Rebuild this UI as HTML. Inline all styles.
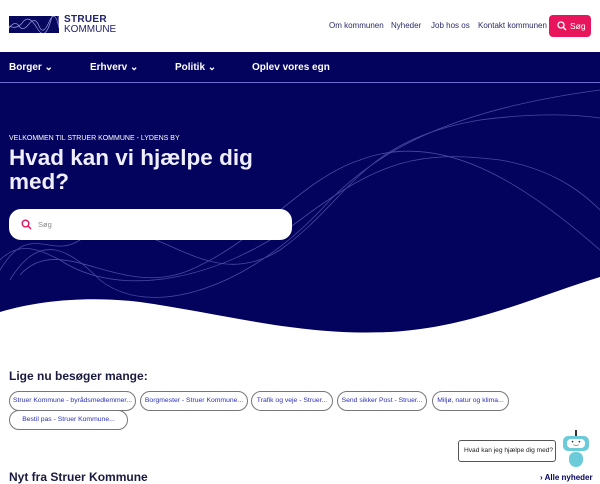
<!DOCTYPE html>
<html><head><meta charset="utf-8"><style>
*{margin:0;padding:0;box-sizing:border-box}
body{width:600px;height:480px;overflow:hidden;font-family:"Liberation Sans",sans-serif;background:#fff;position:relative}
.hdr{height:52px;position:relative;background:#fff}
.logo{position:absolute;left:9px;top:16px;width:50px;height:17px;background:#07075e;overflow:hidden}
.lt{position:absolute;left:64px;top:15px;color:#21226a;font-size:10px;line-height:10px}
.lt b{display:block;font-weight:bold;letter-spacing:.3px}
.tl{position:absolute;top:21px;font-size:8px;color:#2a2a6a}
.sbtn{position:absolute;left:549px;top:15px;width:42px;height:22px;background:#e8155c;border-radius:4px;color:#fff;font-size:8.5px;line-height:22px;padding-left:21px}
.nav{position:absolute;top:52px;left:0;width:600px;height:31px;background:#03035e;border-bottom:1px solid #6b6bd0}
.nav span{position:absolute;top:10px;color:#fff;font-weight:bold;font-size:10px}
.pill{position:absolute;height:20px;border:1px solid #777;border-radius:11px;line-height:18px;font-size:6.8px;color:#2c2fb8;text-align:center;white-space:nowrap;background:#fff}
</style></head><body>
<div class="hdr">
<div class="logo"><svg width="50" height="17"><path d="M0 12 Q6 4 10 10 T20 8 T30 10 T40 6 T50 12" stroke="#9a9ae0" fill="none" stroke-width=".7"/><path d="M0 10 Q8 14 14 6 T28 12 T42 4 T50 9" stroke="#9a9ae0" fill="none" stroke-width=".7"/></svg></div>
<div class="lt"><b>STRUER</b>KOMMUNE</div>
<span class="tl" style="left:329px">Om kommunen</span>
<span class="tl" style="left:391px">Nyheder</span>
<span class="tl" style="left:431px">Job hos os</span>
<span class="tl" style="left:478px">Kontakt kommunen</span>
<div class="sbtn"><svg style="position:absolute;left:8px;top:6px" width="10" height="10"><circle cx="4" cy="4" r="3" stroke="#fff" stroke-width="1.3" fill="none"/><path d="M6.2 6.2 L9 9" stroke="#fff" stroke-width="1.4"/></svg>Søg</div>
</div>
<div class="nav">
<span style="left:9px">Borger ⌄</span><span style="left:90px">Erhverv ⌄</span><span style="left:175px">Politik ⌄</span><span style="left:252px">Oplev vores egn</span>
</div>
<svg style="position:absolute;top:83px;left:0" width="600" height="260" viewBox="0 83 600 260">
<rect x="0" y="83" width="600" height="260" fill="#03035e"/>
<g stroke="#5a5ab0" stroke-width=".8" fill="none" opacity=".8">
<path d="M0 270 C30 220 50 260 80 240 C150 200 200 300 280 250 C350 200 360 140 480 120 C540 112 580 115 600 118"/>
<path d="M0 260 C20 240 40 250 60 260 C120 300 220 280 300 220 C380 160 420 150 500 160 C560 170 590 200 600 210"/>
<path d="M10 280 C40 230 70 250 100 280 C150 320 250 290 330 200 C380 150 450 110 600 90"/>
<path d="M20 275 C60 230 120 300 190 270 C260 240 300 180 360 160 C440 130 520 180 600 250"/>
</g>
<path d="M0 312 C40 300 90 296 140 302 C230 315 300 336 390 332 C470 328 540 295 600 277 L600 343 L0 343 Z" fill="#fff"/>
</svg>
<div style="position:absolute;left:9px;top:135px;color:#fff;font-size:7px">VELKOMMEN TIL STRUER KOMMUNE - LYDENS BY</div>
<div style="position:absolute;left:9px;top:146px;color:#eef;font-size:22.5px;font-weight:bold;line-height:24px">Hvad kan vi hjælpe dig<br>med?</div>
<div style="position:absolute;left:9px;top:209px;width:283px;height:31px;background:#fff;border-radius:12px">
<svg style="position:absolute;left:12px;top:10px" width="11" height="11"><circle cx="4.5" cy="4.5" r="3.3" stroke="#e8155c" stroke-width="1.4" fill="none"/><path d="M7 7 L10 10" stroke="#e8155c" stroke-width="1.5"/></svg>
<span style="position:absolute;left:29px;top:11px;font-size:7.5px;color:#888">Søg</span></div>
<div style="position:absolute;left:9px;top:369px;font-size:12px;font-weight:bold;color:#1a1a40">Lige nu besøger mange:</div>
<div class="pill" style="left:9px;top:391px;width:127px">Struer Kommune - byrådsmedlemmer...</div>
<div class="pill" style="left:140px;top:391px;width:108px">Borgmester - Struer Kommune...</div>
<div class="pill" style="left:251px;top:391px;width:82px">Trafik og veje - Struer...</div>
<div class="pill" style="left:337px;top:391px;width:90px">Send sikker Post - Struer...</div>
<div class="pill" style="left:432px;top:391px;width:77px">Miljø, natur og klima...</div>
<div class="pill" style="left:9px;top:410px;width:119px">Bestil pas - Struer Kommune...</div>
<div style="position:absolute;left:458px;top:440px;width:98px;height:22px;border:1px solid #555;border-radius:3px;background:#fff;font-size:6.6px;line-height:20px;padding-left:5px;color:#222;white-space:nowrap">Hvad kan jeg hjælpe dig med?</div>
<div style="position:absolute;left:563px;top:436px;width:26px;height:15px;background:#6ccbd8;border-radius:5px"><div style="position:absolute;left:4px;top:3px;width:18px;height:9px;background:#fff;border-radius:4px;font-size:6px;line-height:8px;text-align:center;color:#333">•‿•</div></div>
<div style="position:absolute;left:575px;top:430px;width:2px;height:6px;background:#333"></div>
<div style="position:absolute;left:569px;top:452px;width:14px;height:15px;background:#6ccbd8;border-radius:7px 7px 8px 8px"></div>
<div style="position:absolute;left:9px;top:470px;font-size:12px;font-weight:bold;color:#1a1a40">Nyt fra Struer Kommune</div>
<div style="position:absolute;left:540px;top:473px;font-size:8px;font-weight:bold;color:#03035e">› Alle nyheder</div>
</body></html>
